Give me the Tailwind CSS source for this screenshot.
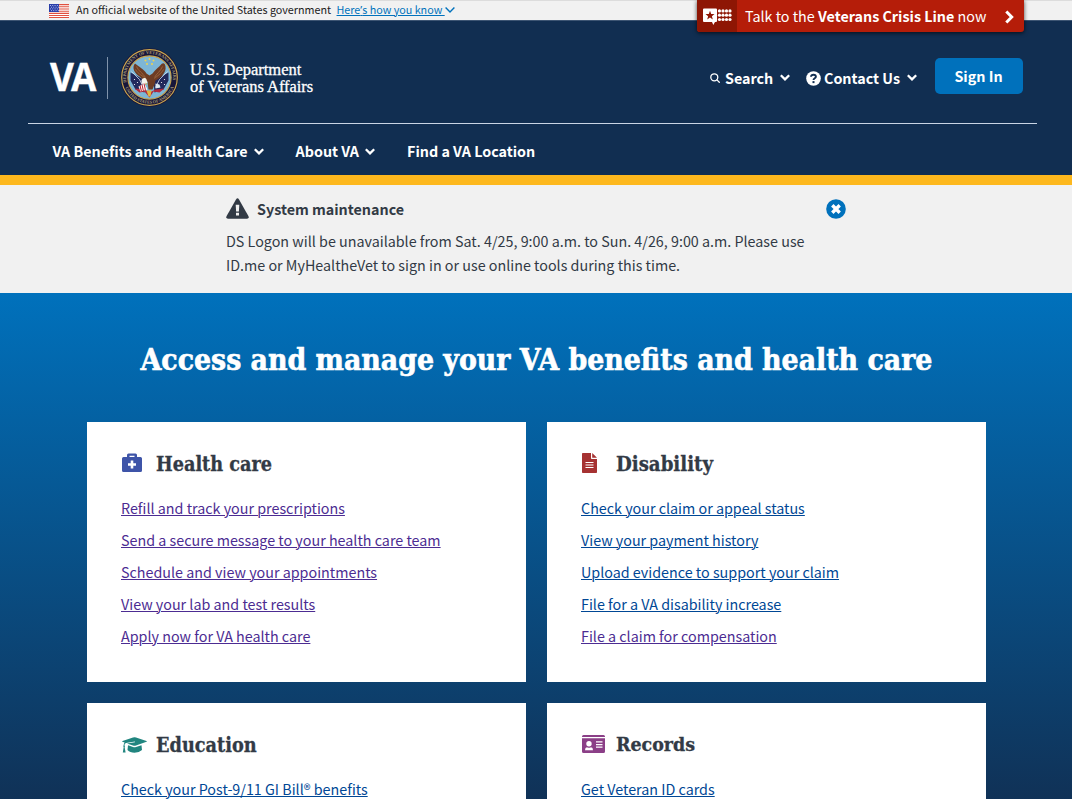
<!DOCTYPE html>
<html lang="en">
<head>
<meta charset="utf-8">
<title>VA.gov Home</title>
<script src="https://cdn.jsdelivr.net/npm/@tailwindcss/browser@4"></script>
</head>
<body class="relative flex h-[799px] w-[1072px] flex-col overflow-hidden bg-white font-['Noto_Sans_CJK_SC',sans-serif] text-[14.32px] text-[#323a45]">

<!-- Government banner -->
<div class="flex h-5 shrink-0 items-center border-t border-[#dcdcdc] bg-[#f1f1f1] pl-[49px] text-[10.75px] leading-[18px] text-[#212121]">
  <svg class="mr-[7px] h-[14px] w-5" viewBox="0 0 20 14">
    <rect width="20" height="14" fill="#fff"/>
    <path d="M0 .6h20M0 2.8h20M0 5h20M0 7.2h20M0 9.4h20M0 11.5h20M0 13.5h20" stroke="#e0503f" stroke-width="1.1"/>
    <rect width="10" height="8" fill="#2a3ea8"/>
    <path d="M1 1.5h9M2 3.2h8M1 4.9h9M2 6.6h8" stroke="#dfe4ff" stroke-width=".8" stroke-dasharray=".9 1.4"/>
  </svg>
  <span class="pb-[2px]">An official website of the United States government</span>
  <a class="ml-[5.5px] flex items-center pb-[2px] whitespace-pre text-[#0071bc]"><span class="underline decoration-1 underline-offset-1">Here<span class="font-['Noto_Sans']">’</span>s how you know </span><svg class="h-[6px] w-[10px]" viewBox="0 0 10 6" fill="none" stroke="currentColor" stroke-width="1.4"><path d="M.6.6 5 5 9.4.6"/></svg></a>
</div>

<!-- Header -->
<header class="h-[155px] shrink-0 border-t border-[#3d5573] bg-[#112e51] font-bold text-white">
  <div class="mr-[35px] ml-7 flex h-[103px] justify-between border-b border-[#c9d5e5] pr-[14px] pl-[21px]">
    <div class="flex items-start">
      <div class="mt-[35px] h-10 w-[47px]"><span class="inline-block origin-left scale-x-[.92] pl-px font-['Open_Sans'] text-[40px] leading-[40px] font-bold tracking-[-3px] [-webkit-text-stroke:0.4px_white]">VA</span></div>
      <div class="mt-[36px] ml-[11px] h-[42px] w-px bg-[#7f93ab]"></div>
      <svg class="mt-[27px] ml-[12px] size-[59px]" viewBox="-29.5 -29.5 59 59">
        <defs>
          <path id="arcTop" d="M-22.8 6A23.6 23.6 0 1 1 22.8 6"/>
          <path id="arcBottom" d="M-24.6 9A26.2 26.2 0 0 0 24.6 9"/>
        </defs>
        <circle r="29.2" fill="#17163a"/>
        <circle r="27.8" fill="none" stroke="#c9a54e" stroke-width="1.2"/>
        <circle r="21.6" fill="#7db6d6" stroke="#c9a54e" stroke-width="1.1"/>
        <g font-family="Liberation Serif, serif" font-weight="700" font-size="4.4" fill="#a89c76">
          <text><textPath href="#arcTop" textLength="82" startOffset="1">DEPARTMENT OF VETERANS AFFAIRS</textPath></text>
          <text><textPath href="#arcBottom" textLength="62" startOffset="1">UNITED STATES OF AMERICA</textPath></text>
        </g>
        <path d="M-19-5-19 3-14 12-5 15-4 3ZM19-5 19 3 14 12 5 15 4 3Z" fill="#22295c"/>
        <path d="M-18-6-10 2-6 10M18-6 10 2 6 10" stroke="#cfdcec" stroke-width=".8" fill="none"/>
        <g fill="#fff"><circle cx="-15" cy="2" r=".6"/><circle cx="-12" cy="5" r=".6"/><circle cx="-15" cy="7" r=".6"/><circle cx="15" cy="2" r=".6"/><circle cx="12" cy="5" r=".6"/><circle cx="15" cy="7" r=".6"/></g>
        <path d="M-15 11-5 12 0 15 6 12 15 11 10 15 4 14 0 20-5 14-10 15Z" fill="#b3293c"/>
        <path d="M-14.5-14C-18-10-15-4-10-1-7 2-4 4-2 4L-1 12 3 12 5 7 6 3C11 1 17-5 16-11 15.5-14 14-15 12-13.5 9-10 6-8 3-4L0-2-3-4C-6-9-10-10-14.5-14Z" fill="#6e3c23"/>
        <path d="M-13-11C-11-6-7-5-4 0M-14-8C-11-3-7-2-4 1M13-11C11-6 7-4 5 0M14-8C11-3 8-2 5 1" stroke="#a26c43" stroke-width=".8" fill="none"/>
        <path d="M-8 3C-7 0-4 0-3 2L-2 5-5 7-8 6Z" fill="#f4f4ee"/>
        <path d="M-11 9-5 6-2 12-9 14Z" fill="#fff"/>
        <path d="M-9.5 8-8 14M-7.5 7-6 14M-5.5 6-4 13" stroke="#c22f3b" stroke-width="1.1"/>
        <path d="M6 6 10 7 11 10 6 11Z" fill="#dbe8ef"/>
        <path d="M-3 13 2 13 1 19-1 19ZM-4 5-2 7-4 7Z" fill="#e0b640"/>
        <g fill="#f1d34b"><circle cx="0" cy="-18.5" r="1"/><circle cx="-4" cy="-17" r="1"/><circle cx="4" cy="-17" r="1"/><circle cx="-2.5" cy="-13.5" r="1"/><circle cx="2.5" cy="-13.5" r="1"/></g>
      </svg>
      <div class="mt-[40px] ml-[11px] font-['Liberation_Serif'] font-normal whitespace-nowrap [-webkit-text-stroke:0.3px_white]">
        <div class="text-[16.5px] leading-[17px]">U.S. Department</div>
        <div class="text-[16.4px] leading-[17px]">of Veterans Affairs</div>
      </div>
    </div>
    <div class="flex items-start leading-6">
      <div class="mt-[45px] flex items-center">
        <svg class="mr-[5px] size-[10px]" viewBox="0 0 10 10" fill="none" stroke="currentColor" stroke-width="1.3"><circle cx="4.3" cy="4.3" r="3.5"/><path d="m6.9 6.9 2.4 2.4" stroke-linecap="round"/></svg>
        <span class="w-[48px]">Search</span>
        <svg class="mb-[1px] ml-[7px] h-[7px] w-[10px]" viewBox="0 0 10 7" fill="none" stroke="currentColor" stroke-width="2.3"><path d="M.8 1.2 5 5.4 9.2 1.2"/></svg>
      </div>
      <div class="mt-[45px] ml-[16px] flex items-center">
        <svg class="mt-px mr-[3px] size-[15px]" viewBox="0 0 15 15"><circle cx="7.5" cy="7.5" r="7.3" fill="#fff"/><path d="M5 5.7C5.2 3 9.9 3 9.9 5.7 9.9 7.4 7.5 7.2 7.5 9.1" fill="none" stroke="#112e51" stroke-width="1.9"/><rect x="6.5" y="10.1" width="2" height="2" fill="#112e51"/></svg>
        <span class="w-[76px]">Contact Us</span>
        <svg class="mb-[1px] ml-[7px] h-[7px] w-[10px]" viewBox="0 0 10 7" fill="none" stroke="currentColor" stroke-width="2.3"><path d="M.8 1.2 5 5.4 9.2 1.2"/></svg>
      </div>
      <button class="mt-[37px] ml-[18px] h-9 w-[88px] rounded-[5px] bg-[#0071bc] pr-px leading-9">Sign In</button>
    </div>
  </div>
  <nav class="flex h-[51px] items-center pt-[3px] pl-[52.5px] leading-6 whitespace-nowrap">
    <span>VA Benefits and Health Care</span>
    <svg class="ml-[6.5px] h-[7px] w-[10px]" viewBox="0 0 10 7" fill="none" stroke="currentColor" stroke-width="2.3"><path d="M.8 1.2 5 5.4 9.2 1.2"/></svg>
    <span class="ml-[31.5px]">About VA</span>
    <svg class="ml-[6px] h-[7px] w-[10px]" viewBox="0 0 10 7" fill="none" stroke="currentColor" stroke-width="2.3"><path d="M.8 1.2 5 5.4 9.2 1.2"/></svg>
    <span class="ml-[32px]">Find a VA Location</span>
  </nav>
</header>
<div class="h-[10px] shrink-0 bg-[#fdb81e]"></div>

<!-- Maintenance notice -->
<section class="h-[108px] shrink-0 bg-[#f1f1f1] pr-[226px] pl-[226px]">
  <div class="flex items-center pt-3">
    <svg class="mb-[1px] h-[21px] w-[23px]" viewBox="0 0 23 21"><path d="M10 1.4Q11.5-.8 13 1.4L22.5 18.3Q23.3 20.5 21 20.7H2Q-.3 20.5.5 18.3Z" fill="#323a45"/><path d="M9.7 6.8h3.6l-.4 6.8h-2.8ZM10 14.8h3v2.8h-3Z" fill="#f1f1f1"/></svg>
    <h2 class="ml-2 leading-6 font-bold">System maintenance</h2>
    <svg class="mb-[1px] ml-auto size-5" viewBox="0 0 20 20"><circle cx="10" cy="10" r="9.8" fill="#0071bc"/><path d="M6.3 6.3l7.4 7.4M13.7 6.3l-7.4 7.4" stroke="#fff" stroke-width="3.4"/></svg>
  </div>
  <p class="mt-2 leading-6 whitespace-nowrap">DS Logon will be unavailable from Sat. 4/25, 9:00 a.m. to Sun. 4/26, 9:00 a.m. Please use<br>ID.me or MyHealtheVet to sign in or use online tools during this time.</p>
</section>

<!-- Benefit hub -->
<main class="h-[506px] shrink-0 bg-[linear-gradient(#0071bc,#112e51_535px)]">
  <h1 class="pt-[47px] pl-[140.5px] font-['DejaVu_Serif_Condensed','DejaVu_Serif',serif] text-[29.82px] leading-[40px] font-bold whitespace-nowrap text-white [-webkit-text-stroke:0.6px_white]">Access and manage your VA benefits and health care</h1>
  <div class="mt-[42px] grid grid-cols-[439px_439px] grid-rows-[260px_96px] gap-[21px] pl-[87px] text-[#004795]">
    <article class="bg-white px-[34px] pt-[27px]">
      <h2 class="flex h-[30px] items-center font-['DejaVu_Serif_Condensed','DejaVu_Serif',serif] text-[19.65px] leading-[30px] font-bold text-[#323a45] [-webkit-text-stroke:0.3px_#323a45]">
        <span class="flex w-[35px] pl-px"><svg class="mb-[2px] h-5 w-5" viewBox="0 0 20 20"><path d="M5 4V2Q5 .5 6.5.5H13.5Q15 .5 15 2V4H18.5Q20 4 20 5.5V17.5Q20 19 18.5 19H1.5Q0 19 0 17.5V5.5Q0 4 1.5 4ZM7.5 4H12.5V2.8H7.5Z" fill="#3e54a8" fill-rule="evenodd"/><path d="M10 7.5v8M6 11.5h8" stroke="#fff" stroke-width="2.6"/></svg></span>
        <span class="pt-px">Health care</span>
      </h2>
      <ul class="mt-[17px] space-y-2 leading-6 text-[#4c2c92]">
        <li><a class="underline decoration-1 underline-offset-1">Refill and track your prescriptions</a></li>
        <li><a class="underline decoration-1 underline-offset-1">Send a secure message to your health care team</a></li>
        <li><a class="underline decoration-1 underline-offset-1">Schedule and view your appointments</a></li>
        <li><a class="underline decoration-1 underline-offset-1">View your lab and test results</a></li>
        <li><a class="underline decoration-1 underline-offset-1">Apply now for VA health care</a></li>
      </ul>
    </article>
    <article class="bg-white px-[34px] pt-[27px]">
      <h2 class="flex h-[30px] items-center font-['DejaVu_Serif_Condensed','DejaVu_Serif',serif] text-[20.2px] leading-[30px] font-bold text-[#323a45] [-webkit-text-stroke:0.3px_#323a45]">
        <span class="flex w-[35px] pl-px"><svg class="mb-[2px] h-5 w-[15px]" viewBox="0 0 15 20"><path d="M0 .8Q0 0 .8 0H9V5.2Q9 6 9.8 6H15V19.2Q15 20 14.2 20H.8Q0 20 0 19.2ZM10.2 0 15 4.8H10.2Z" fill="#a63232"/><path d="M3.5 9.5h8M3.5 12h8M3.5 14.5h8" stroke="#fff" stroke-width="1.2"/></svg></span>
        Disability
      </h2>
      <ul class="mt-[17px] space-y-2 leading-6">
        <li><a class="underline decoration-1 underline-offset-1">Check your claim or appeal status</a></li>
        <li><a class="underline decoration-1 underline-offset-1">View your payment history</a></li>
        <li><a class="underline decoration-1 underline-offset-1">Upload evidence to support your claim</a></li>
        <li><a class="underline decoration-1 underline-offset-1">File for a VA disability increase</a></li>
        <li><a class="text-[#4c2c92] underline decoration-1 underline-offset-1">File a claim for compensation</a></li>
      </ul>
    </article>
    <article class="bg-white px-[34px] pt-[27px]">
      <h2 class="flex h-[30px] items-center font-['DejaVu_Serif_Condensed','DejaVu_Serif',serif] text-[19.7px] leading-[30px] font-bold text-[#323a45] [-webkit-text-stroke:0.3px_#323a45]">
        <span class="flex w-[35px] pl-px"><svg class="h-4 w-[25px]" viewBox="0 0 25 16" fill="#21857f"><path d="M12.5.3Q13 .2 14 .5L24.5 4Q25.2 4.4 24.5 4.8L14 8.5Q12.5 9 11 8.5L5 6.5 13 5.2 12.8 4.6 4 5.9Q2.6 6.4 2.4 8.2 3.4 9 2.6 10L3.6 15.5H.8L1.7 10Q.8 9 1.7 8.2 1.7 6.5 2.6 5.5L.5 4.8Q-.2 4.4.5 4L11 .5Z"/><path d="M6 8.3 11 10Q12.5 10.5 14 10L19.5 8.2 20 13Q17 15.8 12.5 15.8 8 15.8 5.5 13Z"/></svg></span>
        <span class="pt-px">Education</span>
      </h2>
      <ul class="mt-[17px] leading-6">
        <li><a class="underline decoration-1 underline-offset-1">Check your Post-9/11 GI Bill® benefits</a></li>
      </ul>
    </article>
    <article class="bg-white px-[34px] pt-[27px]">
      <h2 class="flex h-[30px] items-center font-['DejaVu_Serif_Condensed','DejaVu_Serif',serif] text-[19.4px] leading-[30px] font-bold text-[#323a45] [-webkit-text-stroke:0.3px_#323a45]">
        <span class="flex w-[35px] pl-px"><svg class="mb-[3px] h-[18px] w-[23px]" viewBox="0 0 23 18"><path d="M0 2V1.5Q0 0 1.5 0H21.5Q23 0 23 1.5V2ZM0 3.2H23V16.5Q23 18 21.5 18H1.5Q0 18 0 16.5Z" fill="#8b3f87"/><g fill="#fff"><circle cx="7" cy="8.8" r="2.7"/><path d="M3 15.3Q3 12.5 5 12.3 7 13.3 9 12.3 11 12.5 11 15.3Z"/><path d="M14 6.3h6.5v1.2H14ZM14 9h6.5v1.2H14ZM14 11.6h6.5v1.2H14Z"/></g></svg></span>
        Records
      </h2>
      <ul class="mt-[17px] leading-6">
        <li><a class="underline decoration-1 underline-offset-1">Get Veteran ID cards</a></li>
      </ul>
    </article>
  </div>
</main>

<!-- Crisis line tab hangs over the banner and header -->
<div class="absolute top-0 left-[697px] flex h-8 w-[327px] items-center rounded-b-[3px] bg-[#b51d09] text-white shadow-[0_1px_4px_rgba(0,0,0,.7)]">
  <div class="flex h-8 w-10 items-center rounded-bl-[3px] bg-[#8e1604] pl-[6px]">
    <svg class="h-[17px] w-[29px]" viewBox="0 0 29 17" fill="#fff"><path d="M1 .5H13Q14 .5 14 1.5V13Q14 14 13 14H12L10.3 17 9 14H1Q0 14 0 13V1.5Q0 .5 1 .5Z"/><path d="M7 2.8 8.2 5.9 11.5 6.1 8.9 8.2 9.8 11.4 7 9.6 4.2 11.4 5.1 8.2 2.5 6.1 5.8 5.9Z" fill="#8e1604"/><g><circle cx="16.5" cy="2.9" r="1.6"/><circle cx="20" cy="2.9" r="1.6"/><circle cx="23.5" cy="2.9" r="1.6"/><circle cx="27" cy="2.9" r="1.6"/><circle cx="16.5" cy="7.2" r="1.6"/><circle cx="20" cy="7.2" r="1.6"/><circle cx="23.5" cy="7.2" r="1.6"/><circle cx="27" cy="7.2" r="1.6"/><circle cx="16.5" cy="11.5" r="1.6"/><circle cx="20" cy="11.5" r="1.6"/><circle cx="23.5" cy="11.5" r="1.6"/><circle cx="27" cy="11.5" r="1.6"/></g></svg>
  </div>
  <span class="ml-[8px] leading-8 whitespace-nowrap">Talk to the <b>Veterans Crisis Line</b> now</span>
  <svg class="mt-px mr-[10px] ml-auto h-[14px] w-[9px]" viewBox="0 0 9 14" fill="none" stroke="currentColor" stroke-width="3"><path d="M1.3 1.5 6.7 7 1.3 12.5"/></svg>
</div>
</body>
</html>
